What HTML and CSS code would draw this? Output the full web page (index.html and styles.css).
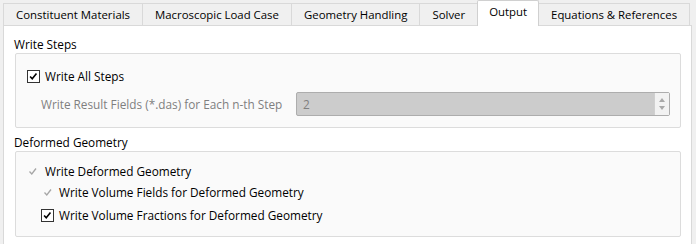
FILE: index.html
```html
<!DOCTYPE html>
<html>
<head>
<meta charset="utf-8">
<link rel="stylesheet" href="styles.css">
</head>
<body>
<div class="tabs">
  <div class="tab">Constituent Materials</div>
  <div class="tab">Macroscopic Load Case</div>
  <div class="tab">Geometry Handling</div>
  <div class="tab">Solver</div>
  <div class="tab selected">Output</div>
  <div class="tab">Equations &amp; References</div>
</div>
<div class="pane">
  <div class="group-title">Write Steps</div>
  <div class="group group-steps">
    <div class="row">
      <span class="box checked"><svg viewBox="0 0 13 13"><path d="M2.5 6.5 L5 9.2 L10 3" /></svg></span>
      <span class="label">Write All Steps</span>
    </div>
    <div class="form-row">
      <span class="label disabled">Write Result Fields (*.das) for Each n-th Step</span>
      <div class="spin">
        <span class="spin-value">2</span>
        <div class="spin-buttons">
          <span class="arrow up"></span>
          <span class="arrow down"></span>
        </div>
      </div>
    </div>
  </div>
  <div class="group-title second">Deformed Geometry</div>
  <div class="group group-deformed">
    <div class="row r1">
      <span class="mark"><svg viewBox="0 0 13 13"><path d="M2.5 6.5 L4.8 9 L9 3.5" /></svg></span>
      <span class="label">Write Deformed Geometry</span>
    </div>
    <div class="row r2 sub">
      <span class="mark"><svg viewBox="0 0 13 13"><path d="M2.5 6.5 L4.8 9 L9 3.5" /></svg></span>
      <span class="label">Write Volume Fields for Deformed Geometry</span>
    </div>
    <div class="row r3 sub">
      <span class="box checked"><svg viewBox="0 0 13 13"><path d="M2.5 6.5 L5 9.2 L10 3" /></svg></span>
      <span class="label">Write Volume Fractions for Deformed Geometry</span>
    </div>
  </div>
</div>
</body>
</html>
```
FILE: styles.css
```css
html, body {
  margin: 0;
  padding: 0;
}
body {
  background: #f0f0f0;
  font-family: "Open Sans", "Noto Sans", "DejaVu Sans", sans-serif;
  font-size: 11.8px;
  color: #000;
  width: 696px;
  height: 244px;
  overflow: hidden;
}
.tabs {
  display: flex;
  align-items: flex-end;
  height: 25px;
  padding-left: 3px;
}
.tab {
  height: 22px;
  line-height: 21px;
  padding: 0 12px;
  min-width: 58px;
  text-align: center;
  font-size: 11.4px;
  border: 1px solid #d9d9d9;
  border-bottom: none;
  background: #f0f0f0;
  margin-left: -1px;
  white-space: nowrap;
  box-sizing: border-box;
}
.tab:first-child {
  margin-left: 0;
}
.tab.selected {
  line-height: 22px;
  background: #fff;
  border-color: #d0d0d0;
  position: relative;
  z-index: 1;
  margin-bottom: -1px;
  height: 26px;
  padding: 0 11px;
  border-top-left-radius: 2px;
  border-top-right-radius: 2px;
}
.pane {
  margin-left: 3px;
  width: 689px;
  box-sizing: border-box;
  height: 230px;
  background: #fff;
  border: 1px solid #d9d9d9;
  border-bottom: none;
  padding: 0 10px 0 11px;
}
.group-title {
  line-height: 16px;
  padding-top: 10px;
  margin-left: -1px;
}
.group-title.second {
  padding-top: 6px;
}
.group {
  margin-top: 1px;
  background: #fafafa;
  border: 1px solid #dcdcdc;
  border-radius: 2px;
}
.group-steps {
  height: 75px;
  box-sizing: border-box;
  padding: 12px 10px 0 11px;
}
.group-deformed {
  height: 86px;
  box-sizing: border-box;
  padding: 9px 10px 0 11px;
}
.row {
  display: flex;
  align-items: center;
  height: 20px;
}
.box {
  width: 13px;
  height: 13px;
  box-sizing: border-box;
  border: 1px solid #333;
  background: #fff;
  display: flex;
  margin-right: 5px;
}
.box svg {
  width: 11px;
  height: 11px;
}
.box svg path {
  fill: none;
  stroke: #000;
  stroke-width: 1.9;
}
.mark {
  width: 13px;
  height: 13px;
  margin-right: 5px;
  display: flex;
}
.mark svg {
  width: 13px;
  height: 13px;
}
.mark svg path {
  fill: none;
  stroke: #a6a6a6;
  stroke-width: 1.3;
}
.form-row {
  display: grid;
  grid-template-columns: 255px 1fr;
  align-items: center;
  margin-top: 6px;
  padding-left: 14px;
}
.disabled {
  color: #7f7f7f;
}
.spin {
  height: 24px;
  box-sizing: border-box;
  border: 1px solid #adadad;
  border-radius: 2px;
  background: #cccccc;
  display: flex;
  align-items: center;
}
.spin-value {
  flex: 1;
  padding-left: 6px;
  color: #7f7f7f;
}
.spin-buttons {
  width: 14px;
  height: 22px;
  background: #f2f2f2;
  border-left: 1px solid #d0d0d0;
  display: flex;
  flex-direction: column;
  align-items: center;
  justify-content: center;
  gap: 4px;
}
.arrow {
  width: 0;
  height: 0;
  border-left: 3.5px solid transparent;
  border-right: 3.5px solid transparent;
}
.arrow.up {
  border-bottom: 4px solid #a8a8a8;
}
.arrow.down {
  border-top: 4px solid #a8a8a8;
}
.r2 {
  margin-top: 1px;
}
.r3 {
  margin-top: 3px;
}
.sub {
  padding-left: 14px;
}
.r2 .mark {
  margin-left: 1px;
  margin-right: 4px;
}
```
